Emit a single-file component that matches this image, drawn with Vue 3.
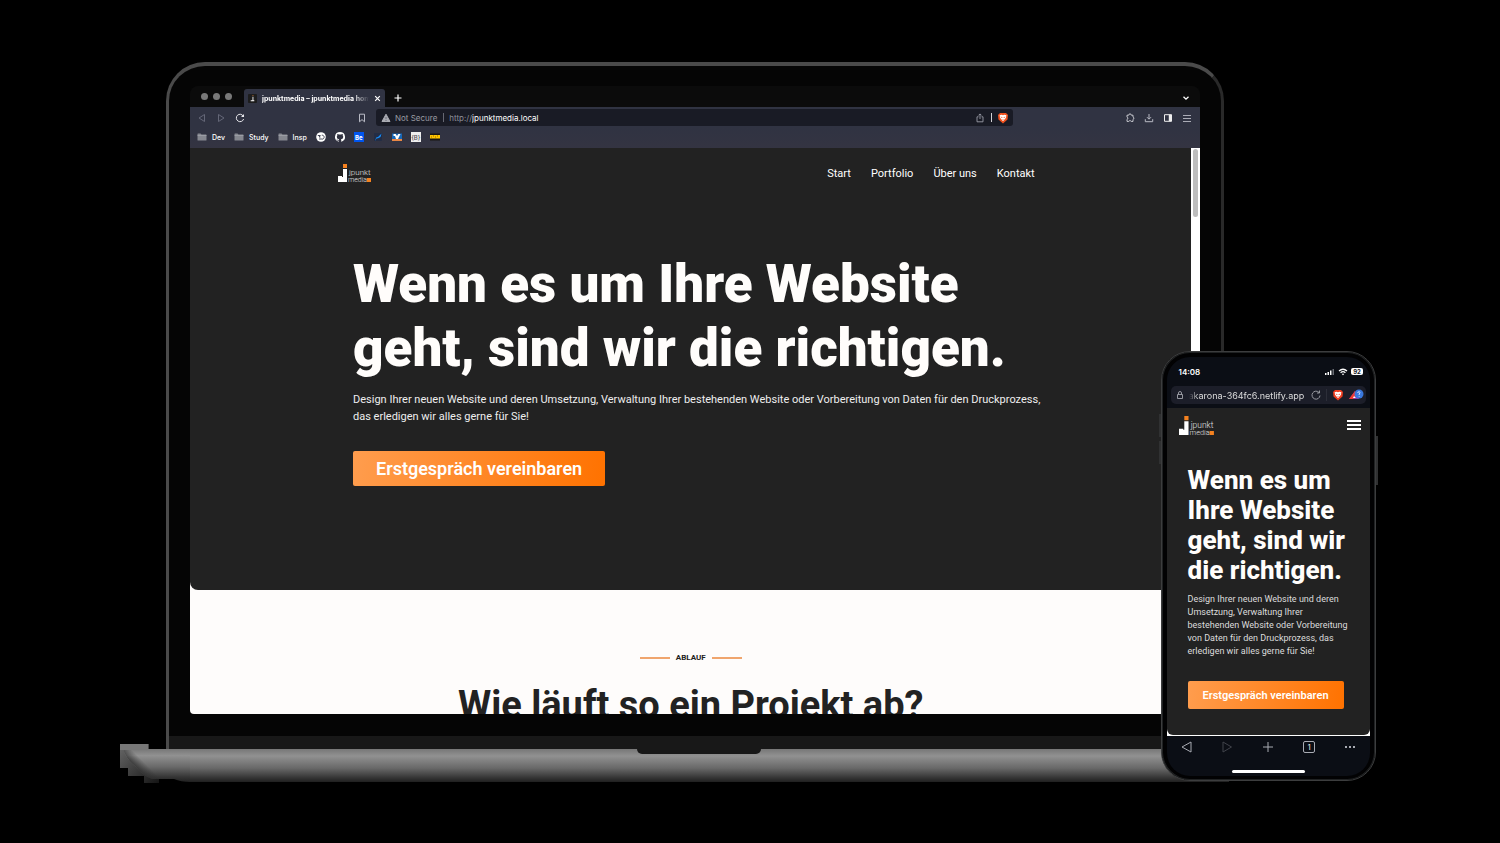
<script setup>
import { ref } from 'vue'

const host = ref('jpunktmedia.local')
const mobileHost = ref('akarona-364fc6.netlify.app')
const folders = ['Dev', 'Study', 'Insp']
const navigation = [
  { label: 'Start', target: '#start' },
  { label: 'Portfolio', target: '#portfolio' },
  { label: 'Über uns', target: '#ueber-uns' },
  { label: 'Kontakt', target: '#kontakt' }
]
const headline = 'Wenn es um Ihre Website geht, sind wir die richtigen.'
const intro = 'Design Ihrer neuen Website und deren Umsetzung, Verwaltung Ihrer bestehenden Website oder Vorbereitung von Daten für den Druckprozess, das erledigen wir alles gerne für Sie!'
</script>

<template>
  <main class="showcase">
    <div class="stage">
      <section class="laptop" aria-label="Desktop">
        <div class="lid">
          <div class="screen">
            <div class="tabstrip">
              <div class="lights"><i></i><i></i><i></i></div>
              <div class="tab">
                <svg class="favicon" viewBox="0 0 10 10"><rect width="10" height="10" rx="1" fill="#1d1d1d" /><path d="M5 3h1v4h1v1H3V7h2z" fill="#fff" /><path d="M5 1h1v1H5z" fill="#e98635" /></svg>
                <span class="tab-title">jpunktmedia – jpunktmedia home</span>
                <button class="tab-close" aria-label="Tab schließen"><svg viewBox="0 0 6 6"><path d="M1 1l4 4M5 1L1 5" stroke="#fff" fill="none" /></svg></button>
              </div>
              <button class="new-tab" aria-label="Neuer Tab"><svg viewBox="0 0 8 8"><path d="M4 0.5v7M0.5 4h7" stroke="#fff" stroke-width="1.2" /></svg></button>
              <button class="tab-menu" aria-label="Tabs suchen"><svg viewBox="0 0 8 8"><path d="M1.5 2.7L4 5.2l2.500-2.500" stroke="#fff" stroke-width="1.300" fill="none" /></svg></button>
            </div>

            <div class="toolbar">
              <div class="history">
                <button aria-label="Zurück"><svg viewBox="0 0 10 10"><path d="M7.500 1.500v7L2 5z" fill="none" stroke="#646777" /></svg></button>
                <button aria-label="Vorwärts"><svg viewBox="0 0 10 10"><path d="M2.500 1.500v7L8 5z" fill="none" stroke="#646777" /></svg></button>
                <button aria-label="Neu laden"><svg viewBox="0 0 10 10"><path d="M8.300 3.200A3.700 3.700 0 1 0 8.600 6" fill="none" stroke="#e8e8ec" stroke-width="1" /><path d="M9 1v3H6z" fill="#e8e8ec" /></svg></button>
              </div>
              <button class="save" aria-label="Lesezeichen"><svg viewBox="0 0 10 10"><path d="M2.500 1.200h5v7.600L5 6.600 2.500 8.800z" fill="none" stroke="#b9bbc5" /></svg></button>
              <div class="address">
                <svg class="warning" viewBox="0 0 10 10"><path d="M5 1.200L9 8.500H1z" fill="#a9abb2" stroke="#a9abb2" stroke-linejoin="round" /><path d="M5 4v2.200M5 7v1" stroke="#5b5e6a" stroke-width=".8" /></svg>
                <span class="insecure">Not Secure</span>
                <span class="rule"></span>
                <label class="scheme" for="host">http://</label>
                <input id="host" v-model="host" class="host" type="text">
                <button aria-label="Teilen"><svg viewBox="0 0 10 10"><path d="M3.500 3.800H2v5h6v-5H6.500M5 6V1M3.500 2.400L5 .9l1.500 1.500" fill="none" stroke="#9a9ca7" stroke-width=".9" /></svg></button>
                <span class="rule light"></span>
                <button class="brave" aria-label="Schutz"><svg viewBox="0 0 12 12"><path d="M3 1h6l2 2-.5 4.500L6 11.500 1.500 7.500 1 3z" fill="#ef521f" /><path d="M2.600 3.200l2-.4L6 3.300l1.400-.5 2 .4L8.800 6 6 9.200 3.200 6z" fill="#fff" /><path d="M3.500 4.400l2 .8L5 6.300zM8.500 4.400l-2 .8.500 1.100zM5 7.400h2L6 8.200z" fill="#ef521f" /></svg></button>
              </div>
              <div class="tools">
                <button aria-label="Erweiterungen"><svg viewBox="0 0 10 10"><path d="M2 2.200h1.700a1.300 1.300 0 0 1 2.600 0H8v1.900a1.200 1.200 0 0 1 0 2.300v2H6.200a1.300 1.300 0 0 0-2.400 0H2v-2a1.200 1.200 0 0 0 0-2.300z" fill="none" stroke="#d6d7dd" stroke-width=".9" /></svg></button>
                <button aria-label="Downloads"><svg viewBox="0 0 10 10"><path d="M5 1v5M3 4.200l2 2 2-2M1.300 6.200v2.500h7.400V6.200" fill="none" stroke="#b8bac4" /></svg></button>
                <button aria-label="Seitenleiste"><svg viewBox="0 0 10 10"><path d="M1.500 1.700h7v6.600h-7z" fill="none" stroke="#eee" /><path d="M5.800 1.700h2.700v6.600H5.800z" fill="#eee" /></svg></button>
                <button aria-label="Menü"><svg viewBox="0 0 10 10"><path d="M1 2.500h8M1 5.500h8M1 8.500h8" stroke="#b8bac4" stroke-width=".9" /></svg></button>
              </div>
            </div>

            <div class="bookmarks">
              <a v-for="name in folders" :key="name" class="folder" href="#">
                <svg viewBox="0 0 10 8"><path d="M.5 1q0-.5.5-.5h2.500l1 1H9q.5 0 .5.500v5q0 .5-.5.500H1q-.5 0-.5-.5z" fill="#85878f" /><path d="M.5 2.500h9" stroke="#aaacb2" stroke-width=".6" /></svg>
                <span>{{ name }}</span>
              </a>
              <a class="mark" href="#" aria-label="Automatisierung"><svg viewBox="0 0 10 10"><circle cx="5" cy="5" r="4.800" fill="#fff" /><path d="M1.800 3.500h2.500L3 5h1.500M5.800 3.200a2 2 0 1 1-.8 3.600M3 7h2" fill="none" stroke="#343746" stroke-width=".9" /></svg></a>
              <a class="mark" href="#" aria-label="Code"><svg viewBox="0 0 16 16"><path fill="#fff" d="M8 0a8 8 0 0 0-2.530 15.590c.4.070.55-.17.55-.38v-1.490c-2.010.37-2.530-.49-2.690-.94-.09-.23-.48-.94-.82-1.130-.28-.15-.68-.52-.01-.53.63-.01 1.080.58 1.230.82.72 1.210 1.870.87 2.330.66.07-.52.280-.87.510-1.070-1.780-.2-3.640-.89-3.640-3.950 0-.87.310-1.590.82-2.150-.08-.2-.36-1.020.08-2.120 0 0 .67-.21 2.200.82a7.600 7.600 0 0 1 4 0c1.530-1.040 2.200-.82 2.200-.82.44 1.100.16 1.920.08 2.120.51.560.82 1.270.82 2.150 0 3.070-1.870 3.750-3.650 3.950.29.250.54.730.54 1.480v2.200c0 .21.150.46.550.38A8 8 0 0 0 8 0z" /></svg></a>
              <a class="mark behance" href="#">Be</a>
              <a class="mark" href="#" aria-label="Design"><svg viewBox="0 0 10 10"><rect x="1" y="1" width="8" height="8" rx="1" fill="#232d45" /><path d="M2 9l1.200-3.500L5 5l3.500-3.500L7.500 5 5 6.200 3.500 6.500z" fill="#1590ff" /></svg></a>
              <a class="mark" href="#" aria-label="Bank"><svg viewBox="0 0 10 10"><path d="M0 1.500h10v5.500H0z" fill="#1766b5" /><path d="M0 7h10v2H0z" fill="#e98745" /><path d="M1.500 2h2.200l1.300 2 1.300-2h2.200L6 7H4L3 4 1.500 4z" fill="#fff" /></svg></a>
              <a class="mark paper" href="#">{B}</a>
              <a class="mark" href="#" aria-label="Nachrichten"><svg viewBox="0 0 10 10"><path d="M0 1.500h10v7H0z" fill="#191713" /><path d="M0 3h10v3.500H0z" fill="#ffc400" /><path d="M1 5h1m1-1h1m1 1h1m1-1h1" stroke="#6b4d00" stroke-width=".7" /></svg></a>
            </div>

            <div class="viewport">
              <div class="page">
                <div class="hero" id="start">
                  <header class="site-header">
                    <a class="logo" href="#start" aria-label="jpunkt media">
                      <svg viewBox="0 0 34 20"><path d="M5 1h4v4H5z" fill="#f58220" /><path d="M5 6h4v13H0v-6h4v1h1z" fill="#fff" /><path d="M29 15h4v4h-4z" fill="#f58220" /><text x="11" y="12" class="logo-text">jpunkt</text><text x="10" y="19" class="logo-text small">media</text></svg>
                    </a>
                    <nav class="site-nav">
                      <a v-for="item in navigation" :key="item.label" :href="item.target">{{ item.label }}</a>
                    </nav>
                  </header>
                  <div class="hero-content">
                    <h1>{{ headline }}</h1>
                    <p>{{ intro }}</p>
                    <button class="cta">Erstgespräch vereinbaren</button>
                  </div>
                </div>
                <div class="process">
                  <div class="eyebrow"><span>ABLAUF</span></div>
                  <h2>Wie läuft so ein Projekt ab?</h2>
                </div>
              </div>
              <div class="scrollbar"><div class="thumb"></div></div>
            </div>
          </div>
          <div class="bezel"></div>
          <div class="hinge"></div>
        </div>
        <div class="base">
          <svg class="corner" viewBox="0 0 70 40">
            <defs>
              <linearGradient id="metal" x1="0" y1="5" x2="0" y2="38" gradientUnits="userSpaceOnUse"><stop offset="0" stop-color="#777" /><stop offset=".2" stop-color="#919191" /><stop offset=".55" stop-color="#686868" /><stop offset=".85" stop-color="#353535" /><stop offset="1" stop-color="#202020" /></linearGradient>
              <linearGradient id="edge" x1="0" y1="0" x2="1" y2="1"><stop offset="0" stop-color="#686868" /><stop offset="1" stop-color="#151515" /></linearGradient>
              <linearGradient id="shade" x1="13" y1="23" x2="21" y2="15" gradientUnits="userSpaceOnUse"><stop offset="0" stop-color="#303030" /><stop offset="1" stop-color="#303030" stop-opacity="0" /></linearGradient>
            </defs>
            <path d="M0 0h29v5h10v34H24v-7H8v-8H0z" fill="url(#edge)" />
            <path d="M3 5h67v33q-9 0-16-3H32q-9-3-17-13Q6 15 3 5z" fill="url(#metal)" />
            <path d="M3 5h67v30H32q-9-3-17-13Q6 15 3 5z" fill="url(#shade)" />
            <path d="M0 0h28v6H0z" fill="#777" />
          </svg>
          <div class="deck"><div class="notch"></div></div>
        </div>
      </section>

      <section class="phone" aria-label="Smartphone">
        <i class="key volume-up"></i><i class="key volume-down"></i><i class="key power"></i>
        <div class="phone-screen">
          <div class="status">
            <time>14:08</time>
            <div class="signals">
              <svg class="cell" viewBox="0 0 10 7"><path d="M0 5h1.500v2H0zM2.500 4H4v3H2.500zM5 2.500h1.500V7H5z" fill="#fff" /><path d="M7.500 1H9v6H7.500z" fill="#686b72" /></svg>
              <svg class="wifi" viewBox="0 0 10 8"><path d="M1 3q4-3.500 8 0M2.600 4.700q2.400-2 4.800 0" fill="none" stroke="#fff" stroke-width="1.300" /><path d="M3.800 6l1.200 1.300L6.200 6Q5 5.200 3.800 6z" fill="#fff" /></svg>
              <span class="battery">92</span>
            </div>
          </div>
          <div class="mobile-address">
            <svg class="lock" viewBox="0 0 8 8"><path d="M1.500 3.500h5v4h-5zM2.500 3.500V2a1.500 1.500 0 0 1 3 0v1.500" fill="none" stroke="#a4a5ad" stroke-width=".9" /></svg>
            <input v-model="mobileHost" aria-label="Adresse" type="text">
            <button aria-label="Neu laden"><svg viewBox="0 0 10 10"><path d="M8 2.500a4 4 0 1 0 1 3M8.500.5v2.500H6" fill="none" stroke="#a4a5ad" stroke-width=".9" /></svg></button>
            <span class="mobile-rule"></span>
            <button class="shield" aria-label="Schutz"><svg viewBox="0 0 12 12"><path d="M3 1h6l2 2-.5 4.500L6 11.500 1.500 7.500 1 3z" fill="#ef3d1f" /><path d="M2.600 3.200l2-.4L6 3.300l1.400-.5 2 .4L8.800 6 6 9.200 3.200 6z" fill="#fff" /><path d="M3.500 4.400l2 .8L5 6.300zM8.500 4.400l-2 .8.500 1.100zM5 7.400h2L6 8.200z" fill="#ef3d1f" /></svg></button>
            <button class="rewards" aria-label="Prämien"><svg viewBox="0 0 15 12"><path d="M6 2L0 10h10z" fill="#8d35a5" /><path d="M6 2L0 10h4l3-4z" fill="#f03b32" /><path d="M5 7l2 2H4z" fill="#fff" /><circle cx="10" cy="5" r="4.500" fill="#3978dd" /><path d="M8.700 4q.2-1.500 1.500-1.300 1.800.5 0 2.300v1M10.200 7v.7" fill="none" stroke="#d8e8ff" stroke-width=".9" /></svg></button>
          </div>
          <div class="mobile-page">
            <div class="mobile-hero">
              <header class="mobile-header">
                <a class="logo mobile-logo" href="#start" aria-label="jpunkt media">
                  <svg viewBox="0 0 34 20"><path d="M5 1h4v4H5z" fill="#f58220" /><path d="M5 6h4v13H0v-6h4v1h1z" fill="#fff" /><path d="M29 15h4v4h-4z" fill="#f58220" /><text x="11" y="12" class="logo-text">jpunkt</text><text x="10" y="19" class="logo-text small">media</text></svg>
                </a>
                <button class="burger" aria-label="Menü öffnen"><i></i><i></i><i></i></button>
              </header>
              <div class="mobile-content">
                <h2>{{ headline }}</h2>
                <p>{{ intro }}</p>
                <button class="cta">Erstgespräch vereinbaren</button>
              </div>
            </div>
          </div>
          <div class="mobile-tools">
            <button aria-label="Zurück"><svg viewBox="0 0 12 12"><path d="M10 1v10L1 6z" fill="none" stroke="#a9abb3" stroke-linejoin="round" /></svg></button>
            <button aria-label="Vorwärts"><svg viewBox="0 0 12 12"><path d="M2 1v10L10.500 6z" fill="none" stroke="#41434b" stroke-linejoin="round" /></svg></button>
            <button aria-label="Neuer Tab"><svg viewBox="0 0 12 12"><path d="M6 1v10M1 6h10" stroke="#a9abb3" /></svg></button>
            <button class="count" aria-label="Offene Tabs"><span>1</span></button>
            <button aria-label="Mehr"><svg viewBox="0 0 12 12"><path d="M1 5h2v2H1zM5 5h2v2H5zM9 5h2v2H9z" fill="#a9abb3" /></svg></button>
          </div>
          <div class="home"></div>
        </div>
      </section>
    </div>
  </main>
</template>

<style>
body { margin: 0; background: #000; }
</style>

<style scoped>
.showcase, .showcase * { box-sizing: border-box; }
.showcase { min-height: 100vh; padding: 62px 8%; overflow: hidden; background: #000; color: #fff; font-family: Roboto, "Liberation Sans", sans-serif; }
.stage { position: relative; }
button { display: grid; place-items: center; flex: none; margin: 0; padding: 0; border: 0; background: none; color: inherit; font: inherit; }
a { color: inherit; text-decoration: none; }
h1, h2, p { margin: 0; }
svg { display: block; flex: none; }
input { min-width: 0; margin: 0; padding: 0; border: 0; outline: 0; background: none; color: inherit; font: inherit; }

.lid { width: 84%; margin-left: 46px; padding-top: 20px; border: 3px solid #4a4a4a; border-top-width: 4px; border-right-color: #292929; border-bottom: 0; border-radius: 39px 39px 0 0; background: #050505; }
.screen { margin: 0 21px; overflow: hidden; border-radius: 8px 8px 4px 4px; font-family: Inter, "Liberation Sans", sans-serif; font-size: 7px; }
.tabstrip { display: flex; align-items: flex-end; height: 21px; background: #0b0b0b; }
.lights { display: flex; gap: 5px; align-self: center; width: 54px; padding-left: 11px; }
.lights i { width: 7px; height: 7px; border-radius: 50%; background: #797979; }
.tab { display: flex; align-items: center; gap: 5px; width: 141px; height: 18px; padding: 0 4px; border-radius: 3px 3px 0 0; background: #303342; font-weight: 700; }
.favicon { width: 9px; height: 9px; }
.tab-title { flex: 1; min-width: 0; overflow: hidden; white-space: nowrap; mask-image: linear-gradient(90deg, #000 85%, transparent); }
.tab-close, .tab-close svg { width: 7px; height: 7px; }
.new-tab { width: 26px; height: 18px; }
.new-tab svg, .tab-menu svg { width: 8px; height: 8px; }
.tab-menu { width: 28px; height: 18px; margin-left: auto; }
.toolbar { display: flex; align-items: center; height: 21px; background: #303342; font-size: 8px; }
.toolbar button, .toolbar button svg { width: 10px; height: 10px; }
.history { display: flex; gap: 9px; width: 167px; padding-left: 7px; }
.address { display: flex; align-items: center; flex: 1; height: 17px; margin-left: 9px; padding: 0 4px 0 5px; border-radius: 3px; background: #191b25; }
.warning { width: 10px; height: 10px; }
.insecure { margin-left: 4px; color: #999ba2; }
.rule { width: 1px; height: 9px; margin: 0 5px 0 6px; background: #666873; }
.rule.light { background: #d0d0d4; }
.scheme { color: #8b8d98; }
.host { flex: 1; }
.toolbar .brave, .toolbar .brave svg { width: 12px; height: 12px; }
.tools { display: flex; justify-content: flex-end; gap: 9px; width: 18.500%; padding-right: 8px; }
.bookmarks { display: flex; align-items: center; gap: 9px; height: 20px; padding: 0 7px 2px; background: linear-gradient(#303342, #343442); font-size: 7px; font-weight: 500; }
.folder { display: flex; align-items: center; gap: 5px; }
.folder svg { width: 10px; height: 8px; }
.mark, .mark svg { width: 10px; height: 10px; }
.behance { display: grid; place-items: center; background: #0055ef; font-size: 6px; font-weight: 700; }
.paper { display: grid; place-items: center; background: #eee; color: #4b4b50; font-size: 6px; }

.viewport { display: flex; background: #fefcfb; font-family: Roboto, "Liberation Sans", sans-serif; }
.page { flex: 1; min-width: 0; }
.scrollbar { width: 9px; padding: 1px 2px; background: #fff; }
.thumb { height: 68px; border-radius: 3px; background: #bdbdbd; }
.hero { padding-bottom: 104px; border-radius: 0 0 8px 8px; background: #222; }
.site-header { display: flex; align-items: center; justify-content: space-between; width: 70.500%; height: 50px; margin: 0 auto; padding-right: 9px; }
.logo { display: block; width: 34px; height: 20px; }
.logo-text { fill: #e2e2e2; font-family: Roboto, sans-serif; font-size: 8px; font-weight: 300; }
.logo-text.small { font-size: 7px; }
.site-nav { display: flex; gap: 20px; font-size: 11px; }
.hero-content { margin: 0 15% 0 163px; padding-top: 54px; }
h1 { max-width: 700px; color: #fffdfb; font-size: 53px; font-weight: 900; line-height: 64px; }
.hero-content p { margin-top: 11px; font-size: 11px; line-height: 17px; color: #eee; }
.cta { border-radius: 2px; background: linear-gradient(100deg, #ff9d4e, #ff7200); color: #fff; font-weight: 600; }
.hero-content .cta { height: 35px; margin-top: 26px; padding: 0 23px; font-size: 18px; }
.process { height: 124px; overflow: hidden; color: #222; text-align: center; }
.eyebrow { display: flex; align-items: center; justify-content: center; gap: 6px; padding-top: 63px; font-size: 8px; font-weight: 700; line-height: 10px; }
.eyebrow::before, .eyebrow::after { width: 30px; height: 2px; background: #f0a56d; content: ""; }
.process h2 { margin-top: 19px; font-size: 38px; font-weight: 700; line-height: 46px; }
.bezel { height: 22px; background: #050505; }
.hinge { height: 13px; background: #181818; }
.base { position: relative; display: flex; align-items: flex-end; width: 88%; height: 40px; margin-top: -5px; }
.corner { width: 70px; height: 40px; }
.deck { flex: 1; height: 35px; background: linear-gradient(#777, #919191 20%, #686868 55%, #353535 82%, #202020 94%, #000 95%); }
.notch { width: 12%; height: 5px; margin-left: 43%; border-radius: 0 0 6px 6px; background: #181818; }

.phone { position: absolute; right: 4px; bottom: 3px; width: 17.100%; padding: 5px 5px 4px; border: 1px solid #3c3d3e; border-radius: 29px; background: #020203; box-shadow: inset 0 0 0 1px #202223; }
.key { position: absolute; width: 2px; background: #303132; }
.volume-up { top: 62px; left: -3px; height: 23px; }
.volume-down { top: 89px; left: -3px; height: 23px; }
.power { top: 84px; right: -3px; height: 49px; }
.phone-screen { overflow: hidden; border-radius: 23px; background: #0b0e15; font-family: Inter, "Liberation Sans", sans-serif; }
.status { display: flex; align-items: center; justify-content: space-between; height: 29px; padding: 0 7px 0 12px; font-size: 8px; font-weight: 600; }
.signals { display: flex; align-items: center; gap: 3px; }
.cell { width: 10px; height: 7px; }
.wifi { width: 10px; height: 8px; }
.battery { width: 12px; height: 7px; border-radius: 2px; background: #fff; color: #15171d; font-size: 6px; font-weight: 700; line-height: 7px; text-align: center; }
.mobile-address { display: flex; align-items: center; gap: 5px; height: 18px; margin: 0 4px 4px; padding: 0 2px 0 5px; border-radius: 5px; background: #1c1e29; color: #ddd; font-size: 9px; }
.mobile-address button, .mobile-address button svg { width: 10px; height: 10px; }
.mobile-address .shield, .mobile-address .shield svg { width: 12px; height: 12px; }
.lock { width: 8px; height: 8px; }
.mobile-address input { flex: 1; mask-image: linear-gradient(90deg, transparent, #000 8%); }
.mobile-rule { width: 1px; height: 12px; background: #2c2e39; }
.mobile-address .rewards, .mobile-address .rewards svg { width: 15px; height: 12px; }
.mobile-page { padding-bottom: 1px; background: #fff; }
.mobile-hero { padding-bottom: 26px; border-radius: 0 0 6px 6px; background: #222; font-family: Roboto, "Liberation Sans", sans-serif; }
.mobile-header { display: flex; align-items: center; justify-content: space-between; height: 34px; padding: 0 9px 0 12px; }
.mobile-logo { width: 36px; height: 21px; }
.burger { gap: 2px; }
.burger i { width: 14px; height: 2px; background: #fff; }
.mobile-content { padding: 23px 20px 0 21px; }
.mobile-content h2 { color: #fffdfb; font-size: 26px; font-weight: 800; line-height: 30px; }
.mobile-content p { margin-top: 8px; color: #ddd; font-size: 9px; line-height: 13px; }
.mobile-content .cta { height: 28px; margin-top: 23px; padding: 0 15px; font-size: 11px; }
.mobile-tools { display: flex; align-items: center; justify-content: space-between; height: 22px; padding: 0 14px; }
.mobile-tools button, .mobile-tools svg { width: 12px; height: 12px; }
.mobile-tools .count { border: 1px solid #a9abb3; border-radius: 2px; font-size: 7px; }
.home { width: 36%; height: 3px; margin: 12px auto 3px; border-radius: 2px; background: #fff; }
</style>
